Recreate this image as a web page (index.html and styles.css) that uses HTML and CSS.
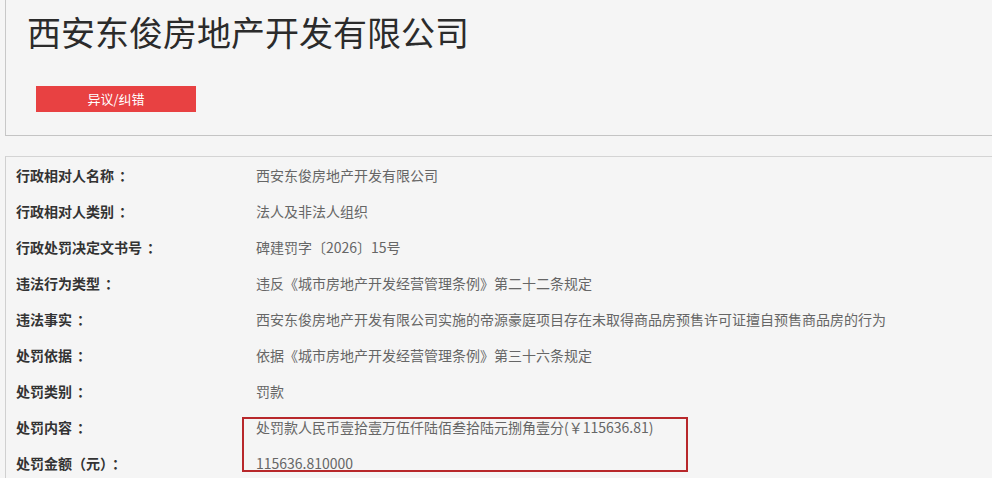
FILE: index.html
```html
<!DOCTYPE html>
<html lang="zh-CN">
<head>
<meta charset="utf-8">
<title>西安东俊房地产开发有限公司</title>
<link rel="stylesheet" href="styles.css">
</head>
<body>
<div class="page">
  <section class="head-box">
    <h1 class="title">西安东俊房地产开发有限公司</h1>
    <a class="btn-objection">异议/纠错</a>
  </section>
  <section class="detail-box">
    <div class="row"><div class="label">行政相对人名称<span class="colon">：</span></div><div class="value">西安东俊房地产开发有限公司</div></div>
    <div class="row"><div class="label">行政相对人类别<span class="colon">：</span></div><div class="value">法人及非法人组织</div></div>
    <div class="row"><div class="label">行政处罚决定文书号<span class="colon">：</span></div><div class="value">碑建罚字〔2026〕15号</div></div>
    <div class="row"><div class="label">违法行为类型<span class="colon">：</span></div><div class="value">违反《城市房地产开发经营管理条例》第二十二条规定</div></div>
    <div class="row"><div class="label">违法事实<span class="colon">：</span></div><div class="value">西安东俊房地产开发有限公司实施的帝源豪庭项目存在未取得商品房预售许可证擅自预售商品房的行为</div></div>
    <div class="row"><div class="label">处罚依据<span class="colon">：</span></div><div class="value">依据《城市房地产开发经营管理条例》第三十六条规定</div></div>
    <div class="row"><div class="label">处罚类别<span class="colon">：</span></div><div class="value">罚款</div></div>
    <div class="row"><div class="label">处罚内容<span class="colon">：</span></div><div class="value">处罚款人民币壹拾壹万伍仟陆佰叁拾陆元捌角壹分(￥115636.81)</div></div>
    <div class="row"><div class="label">处罚金额（元）<span class="colon">：</span></div><div class="value">115636.810000</div></div>
    <div class="highlight"></div>
  </section>
</div>
</body>
</html>
```
FILE: styles.css
```css
html, body {
  margin: 0;
  padding: 0;
  background: #f5f5f5;
  overflow: hidden;
}
body {
  width: 992px;
  height: 478px;
  font-family: "Microsoft YaHei", "Noto Sans CJK SC", "Noto Sans", sans-serif;
  color: #333;
}
.page {
  padding-left: 5px;
}
.head-box {
  border-left: 1px solid #c8c8c8;
  border-bottom: 1px solid #c4c4c4;
  height: 136px;
  box-sizing: border-box;
  padding: 10px 0 0 21px;
  display: flex;
  flex-direction: column;
  align-items: flex-start;
}
.title {
  margin: 0;
  font-size: 34px;
  line-height: 44px;
  font-weight: normal;
  color: #2b2b2b;
}
.btn-objection {
  margin: 32px 0 0 9px;
  width: 160px;
  height: 26px;
  background: #e84142;
  color: #fff;
  font-size: 13px;
  line-height: 26px;
  text-align: center;
}
.detail-box {
  position: relative;
  margin-top: 20px;
  border-left: 1px solid #d0d0d0;
  border-top: 1px solid #d4d4d4;
  padding-left: 10px;
}
.row {
  display: flex;
  height: 36px;
  line-height: 36px;
  font-size: 14px;
}
.label {
  width: 240px;
  font-weight: bold;
  color: #333;
}
.colon {
  padding-left: 5px;
}
.value {
  color: #666;
}
.highlight {
  position: absolute;
  left: 236px;
  top: 260px;
  width: 442px;
  height: 51px;
  border: 2px solid #b8282b;
}
```
